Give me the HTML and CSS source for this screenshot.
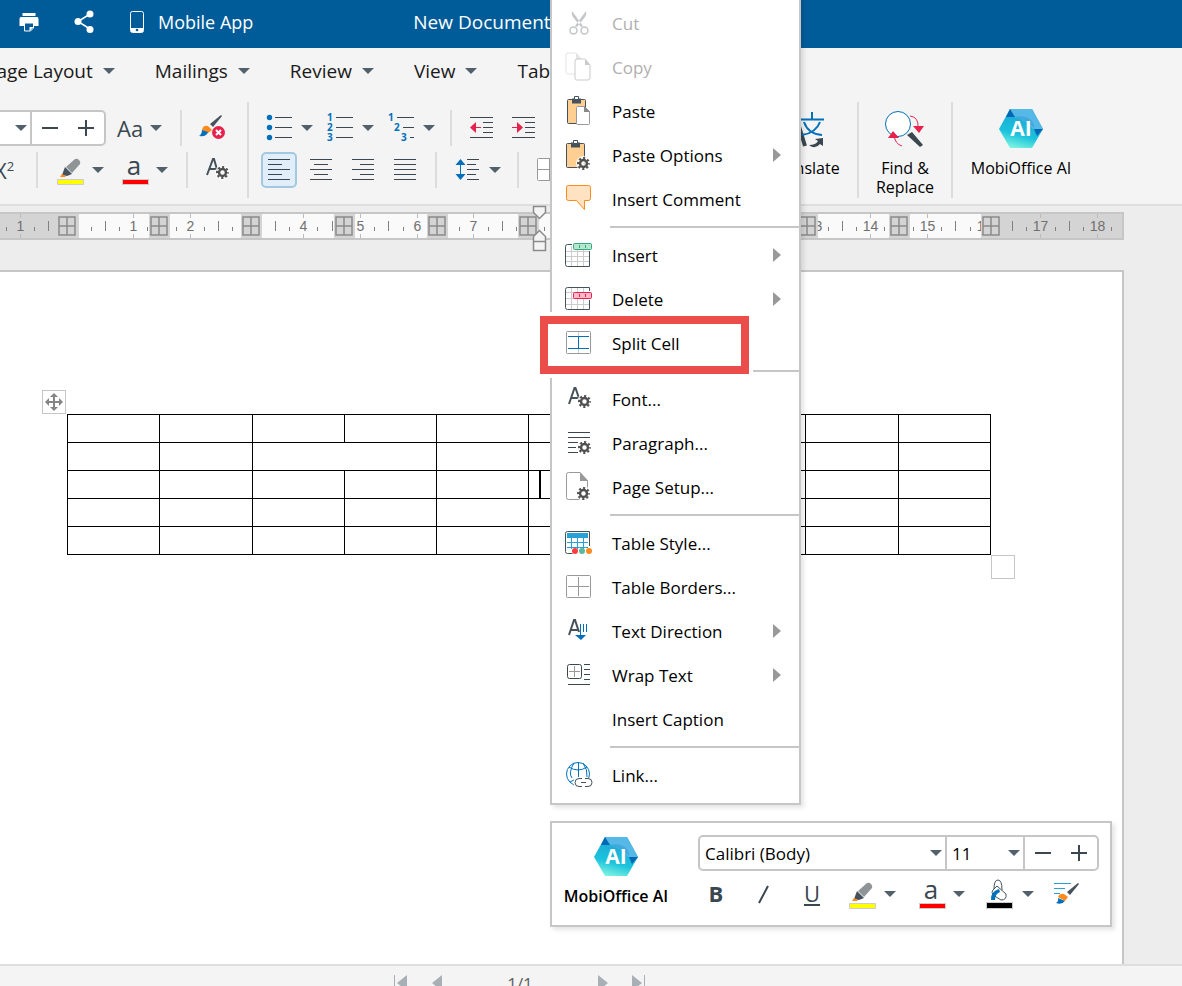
FILE: index.html
```html
<!DOCTYPE html>
<html lang="en">
<head>
    <meta charset="UTF-8">
    <meta name="viewport" content="width=device-width, initial-scale=1.0">
    <title>New Document</title>
    <link rel="stylesheet" href="styles.css">
</head>
<body>
    <!-- Shared icon parts -->
    <svg class="icon-defs" width="0" height="0" aria-hidden="true">
        <defs>
            <linearGradient id="aiFill" x1="0.3" y1="1" x2="0.6" y2="0">
                <stop offset="0" stop-color="#7ff5e2"/>
                <stop offset="0.35" stop-color="#1cc3dc"/>
                <stop offset="1" stop-color="#1d9fd4"/>
            </linearGradient>
            <symbol id="gear" viewBox="0 0 16 16">
                <circle cx="8" cy="8" r="8" fill="#fff" opacity="0.8"/>
                <circle cx="8" cy="8" r="3.700" fill="none" stroke="#505050" stroke-width="2.600"/>
                <circle cx="8" cy="8" r="5.800" fill="none" stroke="#505050" stroke-width="2.200" stroke-dasharray="2.300 2.255" stroke-dashoffset="1.150"/>
            </symbol>
            <symbol id="ai" viewBox="0 0 44 40">
                <path d="M11 0h22l11 20-11 19H11L0 20z" fill="url(#aiFill)"/>
                <path d="M11 0h22l11 20H34Q26 10 15 8z" fill="#55b8e6"/>
                <path d="M15 8q8-2 14 1t6 10q-8-8-20-11z" fill="#3fa9dc"/>
                <path d="M11 0l5 8H7z" fill="#0068b5"/>
                <path d="M44 20l-6 7-3-7z" fill="#0068b5"/>
                <text x="22" y="27" text-anchor="middle" class="ai-text">AI</text>
            </symbol>
            <symbol id="marker" viewBox="0 0 30 30">
                <path d="M11 12l9-8q2-1 4 1t1 4l-8 9z" fill="#8f9496"/>
                <path d="M10 12l7 7-5 2-5-1z" fill="#45525c"/>
                <path d="M7 19l4 2-1 1H5z" fill="#ff8a1c"/>
                <path d="M2.500 24.500h26v5h-26z" fill="#ff0" stroke="#ccc"/>
            </symbol>
            <symbol id="fontcolor" viewBox="0 0 30 30">
                <text x="15" y="20" text-anchor="middle" class="glyph-a">a</text>
                <path d="M3.500 24.500h26v5h-26z" fill="#f00" stroke="#ccc"/>
            </symbol>
            <symbol id="doc" viewBox="0 0 17 23">
                <path d="M3 1h8l5 6v13q0 2-2 2H3q-2 0-2-2V3q0-2 2-2z" fill="#fff" stroke="currentColor"/>
                <path d="M11 1v6h5z" fill="currentColor"/>
            </symbol>
            <symbol id="clip" viewBox="0 0 22 30">
                <rect x="2.500" y="3.500" width="18" height="24" rx="1" fill="#ffcf91" stroke="#45525c"/>
                <path d="M7 2.500h9v5H7z" fill="#45525c"/>
                <path d="M9.500 0.500h4v3h-4z" fill="#fff" stroke="#45525c"/>
            </symbol>
        </defs>
    </svg>

    <header class="titlebar">
        <button class="title-button" aria-label="Print">
            <svg width="20" height="20" viewBox="0 0 20 20"><path d="M3.500 1h13v3h-13z" fill="#fff"/><path d="M2 5h16q1.500 0 1.500 2v7H15v-3H5v3H0.500V7q0-2 1.500-2z" fill="#fff"/><path d="M5.500 11h9v5l-3 3h-6z" fill="#005c99" stroke="#fff"/><path d="M14.500 15l-4 4v-4z" fill="#fff"/></svg>
        </button>
        <button class="title-button" aria-label="Share">
            <svg width="22" height="24" viewBox="0 0 22 24"><path d="M17 4L5 11.500L17 19" fill="none" stroke="#fff" stroke-width="1.500"/><circle cx="17" cy="4" r="3.500" fill="#fff"/><circle cx="5" cy="11.500" r="3.500" fill="#fff"/><circle cx="17" cy="19.500" r="3.500" fill="#fff"/></svg>
        </button>
        <button class="title-button title-app">
            <svg width="16" height="24" viewBox="0 0 16 24"><rect x="1.500" y="1.500" width="13" height="21" rx="2" fill="none" stroke="#fff"/><path d="M2 18h12v4H2z" fill="#fff"/><circle cx="8" cy="20" r="1.300" fill="#005c99"/></svg>
            Mobile App
        </button>
        <h1 class="doc-title">New Document</h1>
    </header>

    <nav class="tabs">
        <button class="tab caret">Page Layout</button>
        <button class="tab caret">Mailings</button>
        <button class="tab caret">Review</button>
        <button class="tab caret">View</button>
        <button class="tab">Table</button>
    </nav>

    <section class="ribbon">
        <div class="ribbon-group">
            <div class="tool-row">
                <div class="font-box size-box">
                    <span class="select-wrap caret"><select aria-label="Font size"><option></option></select></span>
                    <button class="step" aria-label="Decrease font size"><svg width="18" height="18"><path d="M1 9h16" stroke="#3a4750" stroke-width="2"/></svg></button>
                    <button class="step" aria-label="Increase font size"><svg width="18" height="18"><path d="M1 9h16M9 1v16" stroke="#3a4750" stroke-width="2"/></svg></button>
                </div>
                <button class="tool split caret tool-case">Aa</button>
                <span class="separator"></span>
                <button class="tool" aria-label="Clear formatting">
                    <svg width="30" height="30"><path d="M24 2l1 1-9 11-3-3z" fill="#45525c"/><path d="M5 17q1-5 6-4l4 4-4 3z" fill="#ff8a1c"/><path d="M2 23q3-2 3-6l6 2q-1 5-9 4z" fill="#0070ba"/><circle cx="21.500" cy="19.500" r="6.500" fill="#e5214c"/><path d="M19 17l5 5M24 17l-5 5" stroke="#fff" stroke-width="2"/></svg>
                </button>
            </div>
            <div class="tool-row tool-row-loose">
                <button class="tool tool-script"><span>X<sub>2</sub></span></button>
                <button class="tool tool-script"><span>X<sup>2</sup></span></button>
                <span class="separator"></span>
                <button class="tool split caret" aria-label="Highlight color"><svg width="30" height="30"><use href="#marker"/></svg></button>
                <button class="tool split caret" aria-label="Font color"><svg width="30" height="30"><use href="#fontcolor"/></svg></button>
                <span class="separator"></span>
                <button class="tool" aria-label="Font settings"><svg width="30" height="30"><path d="M2 20L8 4h1l4 14M4 14h8" fill="none" stroke="#45525c" stroke-width="2"/><use href="#gear" x="10" y="10" width="15" height="15"/></svg></button>
            </div>
        </div>
        <span class="separator separator-tall"></span>
        <div class="ribbon-group paragraph-group">
            <div class="tool-row tool-row-tight">
                <button class="tool split caret" aria-label="Bullets"><svg width="30" height="30" class="lines"><path d="M11 4.500h17M11 14.500h17M11 24.500h17"/><g fill="#0070ba" stroke="none"><circle cx="5.500" cy="4.500" r="2.700"/><circle cx="5.500" cy="14.500" r="2.700"/><circle cx="5.500" cy="24.500" r="2.700"/></g></svg></button>
                <button class="tool split caret" aria-label="Numbering"><svg width="30" height="30" class="lines"><path d="M11 4.500h17M11 14.500h17M11 24.500h17"/><text x="2" y="8">1</text><text x="2" y="18">2</text><text x="2" y="28">3</text></svg></button>
                <button class="tool split caret" aria-label="Multilevel list"><svg width="30" height="30" class="lines"><path d="M11 4.500h17M17 14.500h11M24 24.500h4"/><text x="2" y="8">1</text><text x="8" y="18">2</text><text x="15" y="28">3</text></svg></button>
                <span class="separator"></span>
                <button class="tool" aria-label="Decrease indent"><svg width="30" height="30" class="lines"><path d="M4 4.500h23M17 9.500h10M17 14.500h10M17 19.500h10M4 24.500h23"/><path d="M10 14.500h5" stroke="#e5214c"/><path d="M4 14.500L10 9v11z" fill="#e5214c" stroke="none"/></svg></button>
                <button class="tool" aria-label="Increase indent"><svg width="30" height="30" class="lines"><path d="M5 4.500h23M18 9.500h10M18 14.500h10M18 19.500h10M5 24.500h23"/><path d="M5 14.500h6" stroke="#e5214c"/><path d="M16 14.500L10 9v11z" fill="#e5214c" stroke="none"/></svg></button>
            </div>
            <div class="tool-row">
                <button class="tool active" aria-label="Align left"><svg width="30" height="30" class="lines"><path d="M4 4.500h22M4 9.500h14M4 14.500h22M4 19.500h14M4 24.500h22"/></svg></button>
                <button class="tool" aria-label="Center"><svg width="30" height="30" class="lines"><path d="M4 4.500h22M8 9.500h14M4 14.500h22M8 19.500h14M4 24.500h22"/></svg></button>
                <button class="tool" aria-label="Align right"><svg width="30" height="30" class="lines"><path d="M4 4.500h22M12 9.500h14M4 14.500h22M12 19.500h14M4 24.500h22"/></svg></button>
                <button class="tool" aria-label="Justify"><svg width="30" height="30" class="lines"><path d="M4 4.500h22M4 9.500h22M4 14.500h22M4 19.500h22M4 24.500h22"/></svg></button>
                <span class="separator"></span>
                <button class="tool split caret" aria-label="Line spacing"><svg width="30" height="30" class="lines"><path d="M15 4.500h12M15 9.500h9M15 14.500h12M15 19.500h9M15 24.500h12"/><path d="M8.500 8v13" stroke="#0070ba"/><path d="M8.500 4l5 6h-10zM8.500 25l5-6h-10z" fill="#0070ba" stroke="none"/></svg></button>
                <span class="separator"></span>
                <button class="tool" aria-label="Borders"><svg width="30" height="30"><rect x="3.500" y="3.500" width="24" height="22" rx="1" fill="#fff" stroke="#999"/><path d="M15.500 4v21M4 14.500h23" stroke="#999"/></svg></button>
            </div>
        </div>
        <button class="big-tool translate-tool">
            <svg width="44" height="48"><path d="M1 41L10 15h4l8 26" fill="none" stroke="#3a4750" stroke-width="4"/><path d="M17 14.500h24M29 7v7M21 17q4 12 18 13M37 17q-4 11-18 13" fill="none" stroke="#0070ba" stroke-width="2"/><path d="M26 40q7 0 9-4l-3-2 8-1v8l-3-2q-5 6-11 1z" fill="#3a4750"/></svg>
            Translate
        </button>
        <span class="separator separator-tall"></span>
        <button class="big-tool find-tool">
            <svg width="44" height="48"><circle cx="15" cy="19" r="12.500" fill="#fff" stroke="#0070ba"/><path d="M24 30l5-3 11 13-3 2z" fill="#3a4750"/><path d="M27 11q9 1 8 12M19 41q-7-2-8-11" fill="none" stroke="#e5214c"/><path d="M30 21h11l-5 7zM5 33h11l-6-7z" fill="#e5214c"/></svg>
            Find &amp; Replace
        </button>
        <span class="separator separator-tall"></span>
        <button class="big-tool ai-tool">
            <svg width="44" height="48"><use href="#ai" y="4" width="44" height="40"/></svg>
            MobiOffice AI
        </button>
    </section>

    <main class="workspace">
        <svg class="ruler" id="ruler" height="46" aria-hidden="true"></svg>

        <div class="page">
            <div class="table-wrap">
                <button class="move-handle" aria-label="Move table"><svg width="18" height="18" viewBox="0 0 18 18"><path d="M9 3v12M3 9h12" stroke="#858585" stroke-width="2"/><path d="M9 0l4 4H5zM9 18l4-4H5zM0 9l4-4v8zM18 9l-4-4v8z" fill="#858585"/></svg></button>
                <table class="doc-table">
                    <tbody>
                        <tr><td></td><td></td><td></td><td></td><td></td><td></td><td></td><td></td><td></td><td></td></tr>
                        <tr><td></td><td></td><td colspan="2"></td><td></td><td></td><td></td><td></td><td></td><td></td></tr>
                        <tr><td></td><td></td><td></td><td></td><td></td><td class="current"></td><td></td><td></td><td></td><td></td></tr>
                        <tr><td></td><td></td><td></td><td></td><td></td><td></td><td></td><td></td><td></td><td></td></tr>
                        <tr><td></td><td></td><td></td><td></td><td></td><td></td><td></td><td></td><td></td><td></td></tr>
                    </tbody>
                </table>
                <span class="resize-handle"></span>
            </div>
        </div>
    </main>

    <footer class="statusbar">
        <button aria-label="First page"><svg width="14" height="16"><path d="M0.500 0v16" stroke="#a9b0b5"/><path d="M13 0v16L3 8z" fill="#a9b0b5"/></svg></button>
        <button aria-label="Previous page"><svg width="10" height="16"><path d="M10 0v16L0 8z" fill="#a9b0b5"/></svg></button>
        <span class="page-count">1/1</span>
        <button aria-label="Next page"><svg width="10" height="16"><path d="M0 0v16l10-8z" fill="#a9b0b5"/></svg></button>
        <button aria-label="Last page"><svg width="14" height="16"><path d="M12.500 0v16" stroke="#a9b0b5"/><path d="M0 0v16l10-8z" fill="#a9b0b5"/></svg></button>
    </footer>

    <!-- Context menu -->
    <div class="context-menu">
        <button class="menu-item" disabled>
            <svg width="30" height="30"><path d="M8 3q-1 3 1 6l8 10 2-1zM22 3q1 3-1 6l-8 10-2-1z" fill="#c3c6c8"/><circle cx="9.500" cy="22.500" r="3.500" fill="none" stroke="#c3c6c8" stroke-width="1.500"/><circle cx="20.500" cy="22.500" r="3.500" fill="none" stroke="#c3c6c8" stroke-width="1.500"/></svg>
            Cut
        </button>
        <button class="menu-item" disabled>
            <svg width="30" height="30"><use href="#doc" x="1" y="0" width="17" height="23" color="#e4e4e4"/><use href="#doc" x="10" y="6" width="17" height="23" color="#c8cacb"/></svg>
            Copy
        </button>
        <button class="menu-item">
            <svg width="30" height="30"><use href="#clip" x="1" width="22" height="30"/><path d="M13.500 10.500h7l5 5v12q0 1-1 1h-11q-1 0-1-1v-16q0-1 1-1z" fill="#fff" stroke="#999"/><path d="M20 10v6h6z" fill="#888"/></svg>
            Paste
        </button>
        <button class="menu-item has-sub">
            <svg width="30" height="30"><use href="#clip" width="22" height="30"/><use href="#gear" x="12" y="16" width="15" height="15"/></svg>
            Paste Options
        </button>
        <button class="menu-item">
            <svg width="30" height="30"><path d="M4.500 1.500h20q2 0 2 2v11q0 2-2 2h-4v9l-8-9h-8q-2 0-2-2v-11q0-2 2-2z" fill="#ffe2c2" stroke="#ff8a1c"/></svg>
            Insert Comment
        </button>
        <hr>
        <button class="menu-item has-sub">
            <svg width="30" height="30"><path d="M7.500 6v21M13.500 6v21M19.500 6v21M2 11.500h24M2 16.500h24M2 21.500h24" stroke="#ccc"/><path d="M8 4.500H3.500q-2 0-2 2v18q0 2 2 2h22V11" fill="none" stroke="#45525c"/><rect x="9.500" y="3.500" width="18" height="6" rx="1" fill="#b5e6cf" stroke="#35a97c"/><path d="M15.500 5v3M21.500 5v3" stroke="#35a97c"/></svg>
            Insert
        </button>
        <button class="menu-item has-sub">
            <svg width="30" height="30"><path d="M7.500 4v22M13.500 4v22M19.500 4v22M2 8.500h24M2 14.500h24M2 20.500h24" stroke="#ccc"/><path d="M25.500 7V3.500h-22q-2 0-2 2v18q0 2 2 2h22V16" fill="none" stroke="#45525c"/><rect x="9.500" y="8.500" width="18" height="6" rx="1" fill="#ffb8c8" stroke="#e5214c"/><path d="M15.500 10v3M21.500 10v3" stroke="#e5214c"/></svg>
            Delete
        </button>
        <button class="menu-item highlighted">
            <svg width="30" height="30"><rect x="2.500" y="3.500" width="24" height="22" rx="1" fill="#fff" stroke="#999"/><path d="M14.500 4v21" stroke="#ccc"/><path d="M4 8.500h21M4 20.500h21M14.500 9v11" stroke="#0070ba"/></svg>
            Split Cell
        </button>
        <hr>
        <button class="menu-item">
            <svg width="30" height="30"><path d="M5 20L10.500 4h1L16 17M7 14h7" fill="none" stroke="#45525c" stroke-width="2"/><use href="#gear" x="13" y="10" width="15" height="15"/></svg>
            Font...
        </button>
        <button class="menu-item">
            <svg width="30" height="30" class="lines"><path d="M4 4.500h22M4 9.500h22M4 14.500h10M4 19.500h8M4 24.500h10"/><use href="#gear" x="13" y="12" width="15" height="15" stroke="none"/></svg>
            Paragraph...
        </button>
        <button class="menu-item">
            <svg width="30" height="30"><path d="M4.500 0.500H16l7.500 8v17q0 2-2 2h-17q-2 0-2-2v-23q0-2 2-2z" fill="#fff" stroke="#999"/><path d="M16 0v9h8z" fill="#999"/><use href="#gear" x="12" y="14" width="15" height="15"/></svg>
            Page Setup...
        </button>
        <hr>
        <button class="menu-item">
            <svg width="30" height="30"><path d="M25.500 18V3.500h-22q-2 0-2 2v18q0 2 2 2h5" fill="none" stroke="#45525c"/><path d="M3 5h21v5H3z" fill="#28a0d8"/><path d="M7.500 10v11M13.500 10v11M19.500 10v11M3 14.500h21M3 19.500h21" stroke="#28a0d8"/><circle cx="11" cy="23" r="3" fill="#ff3d3d"/><circle cx="18" cy="23" r="3" fill="#58b8a0"/><circle cx="25" cy="23" r="3" fill="#ff8a1c"/></svg>
            Table Style...
        </button>
        <button class="menu-item">
            <svg width="30" height="30"><rect x="2.500" y="3.500" width="24" height="22" rx="1" fill="#fff" stroke="#999"/><path d="M14.500 5v19M4 14.500h21" stroke="#999"/></svg>
            Table Borders...
        </button>
        <button class="menu-item has-sub">
            <svg width="30" height="30"><path d="M5 19L10 4h1l4 12M7 14h7" fill="none" stroke="#45525c" stroke-width="2"/><path d="M16.500 8v12M19.500 8v8M22.500 8v8" stroke="#0070ba"/><path d="M11 19h11l-5 5z" fill="#0070ba"/></svg>
            Text Direction
        </button>
        <button class="menu-item has-sub">
            <svg width="30" height="30" class="lines"><rect x="3.500" y="4.500" width="14" height="14" rx="2" fill="none"/><path d="M10.500 6v11M5 11.500h11" stroke="#999"/><path d="M20 4.500h6M20 9.500h6M20 14.500h6M20 19.500h6M4 24.500h22"/></svg>
            Wrap Text
        </button>
        <button class="menu-item">
            <svg width="30" height="30"></svg>
            Insert Caption
        </button>
        <hr>
        <button class="menu-item">
            <svg width="30" height="30"><circle cx="14" cy="14" r="11.500" fill="none" stroke="#0070ba"/><path d="M14.500 3v14M5 7q9 6 18 0M10 3q-6 10-2 15M19 3q5 7 4 14M6 22q4-3 7-2" fill="none" stroke="#0070ba"/><path d="M10 18h18v9H10z" fill="#fff"/><path d="M18 18.500h-3q-4 0-4 4t4 4h3M21 18.500h3q4 0 4 4t-4 4h-3M17 22.500h5" fill="none" stroke="#45525c"/></svg>
            Link...
        </button>
    </div>

    <!-- Floating mini toolbar -->
    <div class="mini-toolbar">
        <button class="mini-ai">
            <svg width="44" height="40"><use href="#ai" width="44" height="40"/></svg>
            MobiOffice AI
        </button>
        <div class="mini-tools">
            <div class="font-box">
                <span class="select-wrap caret"><select aria-label="Font"><option>Calibri (Body)</option></select></span>
                <span class="select-wrap select-size caret"><select aria-label="Size"><option>11</option></select></span>
                <button class="step" aria-label="Decrease font size"><svg width="18" height="18"><path d="M1 9h16" stroke="#3a4750" stroke-width="2"/></svg></button>
                <button class="step" aria-label="Increase font size"><svg width="18" height="18"><path d="M1 9h16M9 1v16" stroke="#3a4750" stroke-width="2"/></svg></button>
            </div>
            <div class="mini-row">
                <button class="tool tool-bold">B</button>
                <button class="tool" aria-label="Italic"><svg width="30" height="30"><path d="M10 24l9-17" stroke="#3a4750" stroke-width="2"/></svg></button>
                <button class="tool tool-underline">U</button>
                <button class="tool split caret" aria-label="Highlight color"><svg width="30" height="30"><use href="#marker"/></svg></button>
                <button class="tool split caret" aria-label="Font color"><svg width="30" height="30"><use href="#fontcolor"/></svg></button>
                <button class="tool split caret" aria-label="Shading"><svg width="30" height="30"><path d="M12 7l9 8q1 6-5 6l-8-5q-2-3 0-5z" fill="#fff" stroke="#45525c"/><path d="M9 10q0-9 4-9t4 10" fill="none" stroke="#45525c"/><path d="M6 21q-1-8 8-11l1 3q-5 2-5 8z" fill="#0070ba"/><path d="M1.500 23.500h26v6h-26z" fill="#000" stroke="#ccc"/></svg></button>
                <button class="tool" aria-label="Format painter"><svg width="30" height="30"><path d="M2 4.500h17M2 9.500h11M2 14.500h6" stroke="#28a0d8"/><path d="M26 4l1 1-9 11-3-3z" fill="#45525c"/><path d="M6 18q2-4 6-3l4 3-3 4z" fill="#ff8a1c"/><path d="M4 24q3-2 2-5l7 3q-3 4-9 2z" fill="#0070ba"/></svg></button>
            </div>
        </div>
    </div>

    <script>
        const ruler = document.getElementById("ruler");
        const zero = 77.5; // x of the 0 cm mark
        const cm = 56.7;
        const markers = [67, 159, 251, 344, 437, 528, 621, 713, 807, 899, 991];
        const rulerEnd = 1124;

        function drawRuler() {
            let out = `<rect x="-2" y="7" width="${rulerEnd + 1}" height="26" fill="#fafafa" stroke="#c6c6c6" stroke-width="2"/>`;
            out += `<rect x="0" y="8" width="79" height="24" fill="#d4d4d4"/>`;
            out += `<rect x="981" y="8" width="${rulerEnd - 983}" height="24" fill="#d4d4d4"/>`;

            // Numbers and ticks, one step for each quarter
            for (let i = -5; i <= 73; i++) {
                const x = Math.round(zero + i * cm / 4) - 0.5;
                if (i % 4 === 0) {
                    if (i === 0) continue;
                    out += `<path d="M${x} 8v4M${x} 28v4" stroke="#bbb"/>`;
                    out += `<text x="${x}" y="25">${Math.abs(i / 4)}</text>`;
                } else if (i % 2 === 0) {
                    out += `<path d="M${x} 15v10" stroke="#808080"/>`;
                } else {
                    out += `<path d="M${x} 21v4" stroke="#808080"/>`;
                }
            }

            // Column markers
            markers.forEach((x) => {
                out += `<rect x="${x - 10}" y="8" width="21" height="24" fill="#d4d4d4"/>`;
                out += `<path d="M${x - 8} 11h16v18h-16zM${x} 11v18M${x - 8} 20h16" fill="none" stroke="#8a8a8a" stroke-width="1.500"/>`;
            });

            // Indent sliders
            out += `<path d="M533.500 0.500h12v6l-6 6-6-6zM533.500 35.500v-5l6-6 6 6v5zM533.500 35.500h12v9h-12z" fill="#f4f4f4" stroke="#8a8a8a" stroke-width="1.500"/>`;
            ruler.innerHTML = out;
        }

        drawRuler();
    </script>
</body>
</html>
```

FILE: styles.css
```css
*, *::before, *::after {
    box-sizing: border-box;
}
body {
    margin: 0;
    height: 100vh;
    display: flex;
    flex-direction: column;
    position: relative;
    overflow: hidden;
    background-color: #ededed;
    color: #1a1a1a;
    font-family: "Open Sans", "Noto Sans", sans-serif;
    font-size: 17px;
}
button, select {
    margin: 0;
    padding: 0;
    border: 0;
    background: none;
    color: inherit;
    font: inherit;
}
button {
    cursor: pointer;
}
svg {
    display: block;
    flex: none;
}
.icon-defs {
    position: absolute;
}

/* Small drop-down arrow after a control */
.caret::after {
    content: "";
    flex: none;
    border: 6px solid transparent;
    border-top-color: #52606b;
    border-bottom: 0;
}

/* Title bar */
.titlebar {
    flex: none;
    height: 48px;
    display: flex;
    align-items: center;
    padding: 0 19px 5px;
    background-color: #005c99;
    color: #fff;
}
.title-button {
    display: flex;
    align-items: center;
    gap: 13px;
    margin-right: 34px;
}
.title-app {
    font-size: 18px;
}
.doc-title {
    margin: 0 0 0 126px;
    font-size: 19px;
    font-weight: 400;
}

/* Tabs */
.tabs {
    flex: none;
    height: 48px;
    display: flex;
    align-items: center;
    gap: 40px;
    margin-left: -15px;
    padding-bottom: 2px;
    font-size: 19px;
    white-space: nowrap;
    background-color: #f4f4f4;
}
.tab {
    display: flex;
    align-items: center;
    gap: 10px;
}

/* Ribbon */
.ribbon {
    flex: none;
    display: flex;
    padding: 6px 0;
    border-bottom: 2px solid #dedede;
    background-color: #f4f4f4;
}
.ribbon-group {
    flex: none;
    display: flex;
    flex-direction: column;
    gap: 6px;
    padding-top: 8px;
    width: 305px;
    margin-left: -58px;
}
.paragraph-group {
    width: 492px;
    margin-left: 12px;
}
.tool-row {
    display: flex;
    align-items: center;
    gap: 6px;
    height: 36px;
}
.tool-row-tight {
    gap: 5px;
}
.tool-row-loose {
    gap: 8px;
}
.separator {
    flex: none;
    width: 2px;
    height: 36px;
    margin: 0 6px;
    background-color: #dcdcdc;
}
.separator-tall {
    height: 96px;
    margin: 0;
}
.tool {
    flex: none;
    width: 36px;
    height: 36px;
    display: flex;
    align-items: center;
    justify-content: center;
    color: #3a4750;
}
.split {
    width: 56px;
    gap: 7px;
    justify-content: flex-start;
    padding-left: 3px;
}
.active {
    border: 2px solid #a5c8e1;
    border-radius: 5px;
    background-color: #e1eef9;
}
.tool-case {
    padding-left: 5px;
    font-size: 22px;
}
.tool-script {
    font-size: 22px;
    white-space: nowrap;
}
.tool-script sup, .tool-script sub {
    font-size: 13px;
    line-height: 0;
}
.lines {
    fill: none;
    stroke: #3a4750;
}
.lines text {
    fill: #0070ba;
    stroke: none;
    font-size: 10px;
    font-weight: 700;
}
.glyph-a {
    fill: #3a4750;
    font-size: 26px;
    font-weight: 500;
}
.ai-text {
    fill: #fff;
    font-size: 21px;
    font-weight: 700;
}
.big-tool {
    flex: none;
    display: flex;
    flex-direction: column;
    align-items: center;
    gap: 6px;
    padding: 3px 8px 0;
    color: #000;
    font-size: 16px;
    line-height: 19px;
}
.translate-tool {
    width: 104px;
}
.find-tool {
    width: 92px;
}
.ai-tool {
    width: 136px;
}

/* Font name and size box */
.font-box {
    height: 36px;
    display: flex;
    border: 2px solid #c6c6c6;
    border-radius: 5px;
    background-color: #fff;
}
.size-box {
    width: 164px;
}
.select-wrap {
    flex: 1;
    display: flex;
    align-items: center;
    padding-right: 3px;
    border-right: 2px solid #c6c6c6;
}
.select-wrap select {
    flex: 1;
    min-width: 0;
    height: 32px;
    padding-left: 5px;
    appearance: none;
    color: #000;
}
.select-size {
    flex: none;
    width: 78px;
}
.step {
    width: 36px;
    display: flex;
    align-items: center;
    justify-content: center;
}

/* Document area */
.workspace {
    flex: 1;
    display: flex;
    flex-direction: column;
    min-height: 0;
    padding-right: 58px;
}
.ruler {
    width: 100%;
    height: 46px;
    overflow: visible;
}
.ruler text {
    fill: #707070;
    font-family: "Liberation Sans", Arial, sans-serif;
    font-size: 14px;
    text-anchor: middle;
}
.page {
    flex: 1;
    margin-top: 18px;
    padding: 142px 131px 0 67px;
    border: 2px solid #c6c6c6;
    border-width: 2px 2px 0 0;
    background-color: #fff;
}
.table-wrap {
    position: relative;
}
.doc-table {
    width: 100%;
    table-layout: fixed;
    border-collapse: collapse;
}
.doc-table td {
    height: 28px;
    padding: 0;
    border: 1px solid #000;
}
.current::before {
    content: "";
    display: block;
    width: 2px;
    height: 27px;
    margin-left: 10px;
    background-color: #000;
}
.move-handle, .resize-handle {
    position: absolute;
    width: 24px;
    height: 24px;
    border: 1px solid #c6c6c6;
    background-color: #fff;
}
.move-handle {
    left: -25px;
    top: -24px;
    padding: 2px;
}
.resize-handle {
    left: 100%;
    top: 100%;
}

/* Status bar */
.statusbar {
    flex: none;
    height: 22px;
    display: flex;
    align-items: flex-start;
    gap: 24px;
    padding: 9px 0 0 394px;
    border-top: 2px solid #dedede;
    background-color: #f4f4f4;
    color: #606060;
}
.page-count {
    width: 108px;
    text-align: center;
    line-height: 18px;
}

/* Context menu */
.context-menu {
    position: absolute;
    left: 550px;
    top: -7px;
    width: 251px;
    padding: 6px 0;
    border: 2px solid #c6c6c6;
    background-color: #fff;
    box-shadow: 3px 3px 4px rgba(0, 0, 0, 0.1);
    color: #000;
}
.menu-item {
    position: relative;
    width: 100%;
    height: 44px;
    display: flex;
    align-items: center;
    gap: 18px;
    padding: 0 18px 0 12px;
    text-align: left;
}
.menu-item:disabled {
    color: #b0b0b0;
}
.has-sub::after {
    content: "";
    margin-left: auto;
    border: 7px solid transparent;
    border-left: 8px solid #999;
    border-right: 0;
}
.context-menu hr {
    height: 2px;
    margin: 5px 0 5px 58px;
    border: 0;
    background-color: #c6c6c6;
}
.highlighted::before {
    content: "";
    position: absolute;
    left: -12px;
    top: -5px;
    width: 209px;
    height: 58px;
    border: 8px solid #eb4d4a;
    box-shadow: 0 0 0 4px #fff, inset 0 0 0 4px #fff;
}

/* Mini toolbar */
.mini-toolbar {
    position: absolute;
    left: 550px;
    top: 821px;
    width: 562px;
    height: 106px;
    display: flex;
    gap: 24px;
    padding: 12px 11px 12px 12px;
    border: 2px solid #c6c6c6;
    background-color: #fff;
    box-shadow: 3px 3px 4px rgba(0, 0, 0, 0.1);
}
.mini-ai {
    width: 116px;
    margin-left: -6px;
    padding-top: 2px;
    display: flex;
    flex-direction: column;
    align-items: center;
    gap: 8px;
    color: #000;
    font-size: 16px;
    font-weight: 600;
    white-space: nowrap;
}
.mini-tools {
    flex: 1;
    display: flex;
    flex-direction: column;
    gap: 5px;
}
.mini-row {
    display: flex;
    gap: 12px;
}
.mini-row .split {
    width: 57px;
    padding-left: 5px;
}
.tool-bold, .tool-underline {
    font-size: 22px;
    line-height: 28px;
    padding-bottom: 2px;
}
.tool-bold {
    font-weight: 700;
}
.tool-underline {
    text-decoration: underline;
}
```
